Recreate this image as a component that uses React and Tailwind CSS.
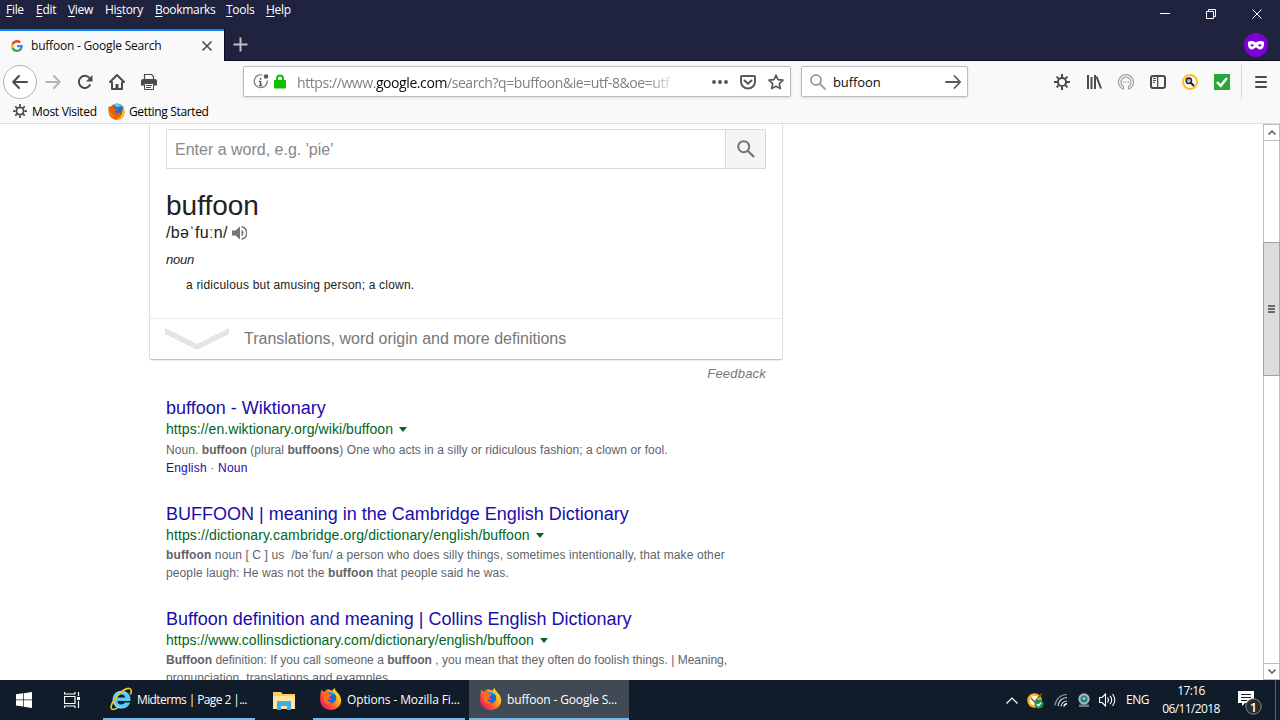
import React from 'react';

const menus = [
  { key: 'F', before: '', after: 'ile', width: 'w-[30px]' },
  { key: 'E', before: '', after: 'dit', width: 'w-[32px]' },
  { key: 'V', before: '', after: 'iew', width: 'w-[37px]' },
  { key: 's', before: 'Hi', after: 'tory', width: 'w-[50px]' },
  { key: 'B', before: '', after: 'ookmarks', width: 'w-[71px]' },
  { key: 'T', before: '', after: 'ools', width: 'w-[40px]' },
  { key: 'H', before: '', after: 'elp', width: 'w-[40px]' },
];

const GoogleIcon = () => (
  <svg width="12" height="12" viewBox="0 0 48 48">
    <path fill="#4285F4" d="M47 24.5c0-1.600-.2-3.200-.4-4.500H24v9h13c-.6 3-2.300 5.500-4.900 7.200v6h7.900C44.500 38 47 31.800 47 24.500z" />
    <path fill="#34A853" d="M24 48c6.500 0 12-2.100 16-5.800l-7.900-6c-2.200 1.400-4.900 2.300-8.100 2.300-6.300 0-11.600-4.200-13.500-9.900H2.400v6.200C6.400 42.600 14.500 48 24 48z" />
    <path fill="#FBBC05" d="M10.500 28.600c-1-3-1-6.200 0-9.200v-6.200H2.400c-3.300 6.800-3.300 14.800 0 21.600z" />
    <path fill="#EA4335" d="M24 9.500c3.500 0 6.700 1.200 9.200 3.600l6.900-6.900C35.900 2.400 30.500 0 24 0 14.500 0 6.400 5.400 2.400 13.200l8.100 6.200C12.400 13.700 17.700 9.500 24 9.500z" />
  </svg>
);

const GearIcon = ({ size = 16, color = '#4a4a4c' }) => (
  <svg width={size} height={size} viewBox="0 0 16 16" fill="none" stroke={color}>
    <circle cx="8" cy="8" r="4.100" strokeWidth="2" />
    <path d="M8 0v3M8 13v3M0 8h3M13 8h3M2.600 2.600l2 2M11.400 11.400l2 2M13.400 2.600l-2 2M4.600 11.400l-2 2" strokeWidth="2" />
  </svg>
);

const FirefoxOld = () => (
  <svg width="17" height="17" viewBox="0 0 32 32">
    <circle cx="17" cy="15" r="14" fill="#2a6fb5" />
    <path d="M10 3c5-3 14-2 17 4-3-2-6-1-8 1-3 0-6-2-9-5z" fill="#6fc4ea" />
    <path d="M2 5c1 2 2 2 4 2 1-2 3-3 5-3-1 2-1 4 1 6 2 0 4 0 5 2-1 2-4 2-4 4 1 4 7 4 10 1 2 1 1 3-1 5 4-1 7-5 7-11 3 4 3 10 0 14-4 7-13 8-19 5C1 26-1 15 2 5z" fill="#e66000" />
    <path d="M28 8c4 6 4 13 0 17-3 4-8 6-13 5 8-1 12-7 12-14z" fill="#ffcb2d" />
    <path d="M3 10c0 8 3 13 10 16-7 0-11-5-11-11z" fill="#ff9500" />
  </svg>
);

const FirefoxIcon = ({ id }) => (
  <svg width="24" height="24" viewBox="0 0 24 24">
    <defs>
      <linearGradient id={id} x1="1" y1="0.100" x2="0.100" y2="0.900">
        <stop offset="0" stopColor="#fff44f" />
        <stop offset="0.350" stopColor="#ffb31c" />
        <stop offset="0.650" stopColor="#ff5a2a" />
        <stop offset="1" stopColor="#f0106c" />
      </linearGradient>
    </defs>
    <path d="M2.600 2.500c.8 1.200 1.500 2 2.500 2.500C6.300 3.500 7.700 2.600 9 2.300l4.500 1.500c.3-1 1-2 2.300-2.800 0 2 1.200 2.900 2.600 4.400 2.200 2.300 3.900 5 3.800 8.200C22.100 19 17.800 23 12 23S1.200 19 1.200 12.800c0-4.300.2-7.500 1.400-10.300z" fill={`url(#${id})`} />
    <circle cx="11.500" cy="11" r="5.800" fill="#1667d8" />
    <path d="M8 5.500C9.500 4 12 4 13.500 5c1 .8 1.500 2 1.500 3-1.500-1.300-4-2-7-2.500z" fill="#35a8f0" />
    <path d="M5 5.500C6.300 4 7.700 3 9 2.700c-.5 1.300-.4 2.700.6 3.900 1.200.2 2.600.5 3.200 1.300-.4 1.200-2.500 1.300-2.500 2.500 1.200.6 2 .9 1.400 1.800-1.200.5-2.400 0-3.400.6.5 2 2.600 2.800 4.900 2.200-1 2.500-6 2.800-7.700-.5C4 12 4 8 5 5.500z" fill="#ff6a22" />
  </svg>
);

const IEIcon = () => (
  <svg width="24" height="24" viewBox="0 0 24 24" fill="none">
    <path d="M21 15.500h-5.200c-.7 1.300-1.900 2-3.500 2-2.200 0-3.700-1.400-3.900-3.600h13c.8-6-3-10.200-8.800-10.200-5.200 0-9 3.800-9 9s3.600 8.900 9 8.900c4.200 0 7.300-2.200 8.400-6.100zM8.500 10.500c.4-1.900 1.800-3 3.900-3s3.500 1.100 3.800 3z" fill="#5cc9f5" />
    <path d="M6 7.500c3-3.400 8-4 11.500-1M5 15c1 3.500 4 5.500 7.500 5.400" stroke="#a9e8ff" strokeWidth="1" />
    <path d="M21.500 7.500c1.300-3.400.8-5.800-1.200-6-2.400-.3-7.300 2.300-11.600 6.800C3.600 13.700 1 19.700 2.600 21.800c1 1.300 3.400.6 6.200-1.200" stroke="#f5c518" strokeWidth="1.700" />
  </svg>
);

const TitleBar = () => (
  <div className="h-[29px] bg-[#20233f] flex justify-between text-white">
    <div className="flex pl-[6px] pt-[2px] text-[12px] leading-4 tracking-[-0.3px]">
      {menus.map((m) => (
        <span key={m.key} className={m.width}>
          {m.before}
          <span className="underline underline-offset-2">{m.key}</span>
          {m.after}
        </span>
      ))}
    </div>
    <div className="flex">
      <svg width="128" height="29" viewBox="0 0 128 29" fill="none" stroke="#fff" strokeWidth="1">
        <path d="M8 13.500h10" />
        <path d="M54.500 11.500h7v7h-7zM56.500 11v-1.500h7v7H62" />
        <path d="M100.500 9.500l9 9M109.500 9.500l-9 9" />
      </svg>
    </div>
  </div>
);

const TabBar = () => (
  <div className="h-[32px] bg-[#20233f] flex">
    <div className="w-[224px] bg-[#f9f9fa] border-t-2 border-[#0a84ff] flex items-center pl-[11px] pr-[11px]">
      <GoogleIcon />
      <span className="ml-[8px] flex-1 text-[12px] tracking-[-0.21px] whitespace-nowrap text-[#0c0c0d]">buffoon - Google Search</span>
      <svg width="12" height="12" viewBox="0 0 12 12" stroke="#4a4a4c" strokeWidth="1.600">
        <path d="M1.500 1.500l9 9M10.500 1.500l-9 9" />
      </svg>
    </div>
    <div className="flex-1 flex items-center justify-between pl-[8px] pr-[12px] border-b border-l border-[#0c0c1f]">
      <svg width="15" height="15" viewBox="0 0 15 15" stroke="#c0c0c9" strokeWidth="2">
        <path d="M7.500 .5v14M.5 7.500h14" />
      </svg>
      <svg width="24" height="24" viewBox="0 0 24 24">
        <circle cx="12" cy="12" r="12" fill="#8000d7" />
        <path fillRule="evenodd" fill="#fff" d="M4 9c2-1.500 5.500-1.200 8 .5 2.500-1.700 6-2 8-.5.5 5-1.500 7.500-4 7.500-2 0-2.700-2-4-2s-2 2-4 2C5.500 16.500 3.500 14 4 9zM6.300 12.300c1 1.600 2.700 1.600 3.700 0-1-1.500-2.700-1.500-3.700 0zM14 12.300c1 1.600 2.700 1.600 3.700 0-1-1.500-2.700-1.500-3.700 0z" />
      </svg>
    </div>
  </div>
);

const NavBar = () => (
  <div className="h-[41px] flex items-center pl-[3px]">
    <div className="w-[34px] h-[34px] rounded-full border border-[#b1b1b3] bg-white flex items-center justify-center">
      <svg width="16" height="16" viewBox="0 0 16 16" fill="none" stroke="#4a4a4c" strokeWidth="2" strokeLinecap="round" strokeLinejoin="round">
        <path d="M15 8H1.500M7 2L1.200 8 7 14" />
      </svg>
    </div>
    <div className="flex items-center gap-4 ml-[8px] w-[198px]">
      <svg width="16" height="16" viewBox="0 0 16 16" fill="none" stroke="#b5b5b7" strokeWidth="2" strokeLinecap="round" strokeLinejoin="round">
        <path d="M1 8h13.500M9 2l5.800 6L9 14" />
      </svg>
      <svg width="16" height="16" viewBox="0 0 16 16" fill="none" stroke="#4a4a4c" strokeWidth="2">
        <path d="M13.300 10.500a6 6 0 1 1-.8-6.500" />
        <path d="M15.500 1v6.500H9z" fill="#4a4a4c" stroke="none" />
      </svg>
      <svg width="16" height="16" viewBox="0 0 16 16" fill="none" stroke="#4a4a4c" strokeWidth="2" strokeLinejoin="round">
        <path d="M1 8l7-7 7 7" strokeLinecap="round" />
        <path d="M3 7.500V15h10V7.500" />
        <path d="M8 15v-5" strokeWidth="3" />
      </svg>
      <svg width="16" height="16" viewBox="0 0 16 16">
        <path d="M3.500 5.500v-5h7l2 2v3" fill="none" stroke="#4a4a4c" strokeWidth="1.200" />
        <path d="M0 7a2 2 0 0 1 2-2h12a2 2 0 0 1 2 2v4.500h-3V9H3v2.500H0z" fill="#4a4a4c" />
        <path d="M3.500 9.500h9v6h-9zM5 11.500h6M5 13.500h5" fill="#fff" stroke="#4a4a4c" />
      </svg>
    </div>
    <div className="w-[548px] h-[31px] bg-white border border-[#bdbdbf] rounded-[2px] shadow-sm flex items-center pl-[8px] pr-[6px]">
      <svg width="18" height="18" viewBox="0 0 18 18">
        <path d="M10.500 2A6.500 6.500 0 1 0 15.200 7.500" fill="none" stroke="#737373" strokeWidth="1.200" />
        <path d="M8.600 5v1.800M8.600 8v5M7 8.500h1.600M7 12.500h3.200" stroke="#5a5a5c" strokeWidth="1.500" />
        <circle cx="14" cy="3.500" r="2.300" fill="#5a5a5c" />
      </svg>
      <svg width="12" height="15" viewBox="0 0 12 15" className="ml-[4px]">
        <path d="M3 7V4.500a3 3 0 0 1 6 0V7" fill="none" stroke="#12bc00" strokeWidth="2" />
        <rect y="6" width="12" height="8.500" rx="1" fill="#12bc00" />
      </svg>
      <span className="ml-[11px] pt-[2px] w-[380px] whitespace-nowrap text-[14px] tracking-[-0.42px] text-[#808080] [mask-image:linear-gradient(to_right,black_92%,transparent)]">
        https://www.<span className="text-[#0c0c0d]">google.com</span>/search?q=buffoon&amp;ie=utf-8&amp;oe=utf
      </span>
      <svg width="16" height="16" viewBox="0 0 16 16" className="ml-auto" fill="#5a5a5c">
        <circle cx="2" cy="8" r="2" />
        <circle cx="8" cy="8" r="2" />
        <circle cx="14" cy="8" r="2" />
      </svg>
      <svg width="16" height="16" viewBox="0 0 16 16" className="ml-3" fill="none" stroke="#5a5a5c" strokeWidth="2" strokeLinecap="round" strokeLinejoin="round">
        <path d="M2 2h12a1 1 0 0 1 1 1v4.500a7 7 0 0 1-14 0V3a1 1 0 0 1 1-1z" />
        <path d="M4.500 6.500L8 9.800l3.500-3.300" />
      </svg>
      <svg width="16" height="16" viewBox="0 0 16 16" className="ml-3" fill="none" stroke="#5a5a5c" strokeWidth="1.700" strokeLinejoin="round">
        <path d="M8 1.200l2 4.500 5 .5-3.700 3.400 1 5L8 12.200l-4.300 2.400 1-5L1 6.200l5-.5z" />
      </svg>
    </div>
    <div className="ml-[10px] w-[167px] h-[31px] bg-white border border-[#bdbdbf] rounded-[2px] shadow-sm flex items-center pl-[8px] pr-[6px]">
      <svg width="16" height="16" viewBox="0 0 16 16" fill="none" stroke="#a0a0a2" strokeWidth="2">
        <circle cx="6" cy="6" r="5" />
        <path d="M9.800 9.800l5.700 5.700" />
      </svg>
      <span className="ml-[7px] pt-[2px] flex-1 text-[13px] tracking-[-0.1px] text-[#0c0c0d]">buffoon</span>
      <svg width="16" height="16" viewBox="0 0 16 16" fill="none" stroke="#5a5a5c" strokeWidth="1.800" strokeLinecap="round" strokeLinejoin="round">
        <path d="M.8 8H15M9.500 2l5.700 6-5.700 6" />
      </svg>
    </div>
    <div className="ml-auto flex items-center gap-4 pr-[11px]">
      <GearIcon />
      <svg width="16" height="16" viewBox="0 0 16 16" stroke="#4a4a4c" strokeWidth="2">
        <path d="M2 1v14M5.500 3v12M9 1v14M10.500 2.500l4.500 12" />
      </svg>
      <svg width="16" height="16" viewBox="0 0 16 16" fill="none" stroke="#a3a3a5">
        <path d="M5 15a7.500 7.500 0 1 1 6 0" strokeWidth="1.200" />
        <path d="M5.500 12.500a5 5 0 1 1 5 0" strokeWidth="1.200" />
        <path d="M5 8h1.200M7.400 8h1.200M9.800 8H11" strokeWidth="1.300" />
        <path d="M5.500 12v3.500M10.500 12v3.500" />
      </svg>
      <svg width="16" height="16" viewBox="0 0 16 16" fill="none" stroke="#4a4a4c">
        <rect x="1" y="2" width="14" height="12" rx="2" strokeWidth="2" />
        <path d="M7.700 2v12" strokeWidth="1.300" />
        <path d="M3 4.500h3M3 6.500h3M3 8.500h2" />
      </svg>
      <svg width="16" height="16" viewBox="0 0 16 16" fill="none">
        <circle cx="8" cy="8" r="7" fill="#fff" stroke="#ffbf1f" strokeWidth="2" />
        <circle cx="6.800" cy="6.800" r="2.800" fill="#999" stroke="#222" strokeWidth="1.300" />
        <path d="M8.800 8.800l3.200 3.200" stroke="#222" strokeWidth="2" />
        <path d="M5.500 7l1 1 1.700-2.200" stroke="#fff" strokeWidth=".8" />
      </svg>
      <svg width="16" height="16" viewBox="0 0 16 16" fill="none">
        <path fill="#27a737" d="M0 0h16v16H0z" />
        <path d="M3 8l3.700 3.800L13 4" stroke="#fff" strokeWidth="2.500" />
      </svg>
      <div className="ml-[-5px] w-px h-[34px] bg-[#d7d7db]" />
      <svg width="16" height="16" viewBox="0 0 16 16" className="ml-[-5px]" stroke="#4a4a4c" strokeWidth="2" strokeLinecap="round">
        <path d="M3 3h10M3 8h10M3 13h10" />
      </svg>
    </div>
  </div>
);

const BookmarksBar = () => (
  <div className="h-[22px] border-b border-[#dcdcdf] flex items-center pl-[13px] pb-[3px] text-[12px] tracking-[-0.35px] text-black">
    <GearIcon size={14} />
    <span className="ml-[5px] w-[76px] pt-[2px] tracking-[-0.3px]">Most Visited</span>
    <FirefoxOld />
    <span className="ml-[4px] pt-[2px]">Getting Started</span>
  </div>
);

const Definition = () => (
  <div className="w-[634px] h-[236px] shrink-0 border border-t-0 border-[#dedede] border-b-[#c4c4c4] rounded-b-[3px] shadow-[0_1px_1px_rgba(0,0,0,0.08)] flex flex-col">
    <div className="mx-4 mt-[5px] h-10 shrink-0 border border-[#d9d9d9] rounded-[1px] flex">
      <div className="flex-1 pl-2 text-[16px] leading-[39px] text-[#878787]">Enter a word, e.g. 'pie'</div>
      <div className="w-10 bg-[#f5f5f5] border-l border-[#d9d9d9] flex items-center justify-center">
        <svg width="18" height="18" viewBox="0 0 18 18" fill="none" stroke="#757575" strokeWidth="2">
          <circle cx="6.700" cy="6.700" r="5.500" />
          <path d="M10.700 10.700l6.300 6.300" strokeWidth="2.300" />
        </svg>
      </div>
    </div>
    <div className="px-4 pt-[20px] text-[#222]">
      <div className="text-[28px] leading-[34px]">buffoon</div>
      <div className="flex items-center h-[19px] text-[16px]">
        <span className="tracking-[0.35px]">/bəˈfuːn/</span>
        <svg width="15" height="14" viewBox="0 0 15 14" className="ml-[4px]" fill="#757575">
          <path d="M0 4.500h3.500L8 .5v13L3.500 9.500H0zM9.500 3.500a4 4 0 0 1 0 7z" />
          <path d="M9.500 .8a6.300 6.300 0 0 1 0 12.400" fill="none" stroke="#757575" strokeWidth="1.500" />
        </svg>
      </div>
      <div className="mt-[9px] text-[13px] leading-[18px] italic tracking-[-0.2px]">noun</div>
      <div className="mt-[8px] pl-5 text-[12px] leading-[17px] tracking-[0.2px]">a ridiculous but amusing person; a clown.</div>
    </div>
    <div className="mt-auto h-[41px] shrink-0 border-t border-[#ebebeb] flex items-center pl-[15px]">
      <svg width="64" height="22" viewBox="0 0 64 22" fill="#e5e5e5">
        <path d="M0 0l32 16L64 0v6L32 22 0 6z" />
      </svg>
      <span className="ml-[15px] text-[16px] text-[#777]">Translations, word origin and more definitions</span>
    </div>
  </div>
);

const Result = ({ title, url, urlClass, textClass, children }) => (
  <div className="h-[105.5px] shrink-0">
    <h3 className="text-[18px] leading-[22px] text-[#1a0dab]">{title}</h3>
    <div className={`flex items-center h-[21px] text-[14px] text-[#006621] ${urlClass}`}>
      {url}
      <svg width="8" height="5" viewBox="0 0 8 5" className="ml-[6px]" fill="#006621">
        <path d="M0 0h8L4 5z" />
      </svg>
    </div>
    <div className={`text-[12px] leading-[18px] text-[#5f6368] whitespace-nowrap ${textClass}`}>{children}</div>
  </div>
);

const Scrollbar = () => (
  <div className="w-[17px] border-x border-[#bdbdbd] bg-white flex flex-col">
    <div className="h-[17px] border-y border-[#bdbdbd] flex items-center justify-center">
      <svg width="8" height="5" viewBox="0 0 8 5" fill="none" stroke="#555" strokeWidth="1.500">
        <path d="M.5 4.500L4 1l3.500 3.500" />
      </svg>
    </div>
    <div className="mt-[101px] -mx-px h-[134px] bg-[#dcdcdc] border border-[#a3a3a3] flex flex-col items-center justify-center gap-px">
      <div className="w-[7px] h-[2px] bg-[#6a6a6a]" />
      <div className="w-[7px] h-[2px] bg-[#6a6a6a]" />
      <div className="w-[7px] h-[2px] bg-[#6a6a6a]" />
    </div>
    <div className="mt-auto h-[17px] border-y border-[#bdbdbd] flex items-center justify-center">
      <svg width="8" height="5" viewBox="0 0 8 5" fill="none" stroke="#555" strokeWidth="1.500">
        <path d="M.5 .5L4 4 7.500 .5" />
      </svg>
    </div>
  </div>
);

const Page = () => (
  <div className="h-[556px] bg-white flex overflow-hidden font-['Liberation_Sans',Arial,sans-serif]">
    <div className="flex-1 pl-[149px] flex flex-col overflow-hidden">
      <Definition />
      <div className="w-[617px] mt-[5px] text-right text-[13px] leading-[18px] italic text-[#777] tracking-[0.2px]">Feedback</div>
      <div className="pl-[17px] mt-[14px]">
        <Result
          title="buffoon - Wiktionary"
          url="https://en.wiktionary.org/wiki/buffoon"
          urlClass="tracking-[0.07px]"
          textClass="tracking-[0.065px] pt-px"
        >
          Noun. <b>buffoon</b> (plural <b>buffoons</b>) One who acts in a silly or ridiculous fashion; a clown or fool.
          <br />
          <span className="tracking-[0.2px]">
            <span className="text-[#1a0dab]">English</span> · <span className="text-[#1a0dab]">Noun</span>
          </span>
        </Result>
        <Result
          title="BUFFOON | meaning in the Cambridge English Dictionary"
          url="https://dictionary.cambridge.org/dictionary/english/buffoon"
          urlClass="tracking-[0.12px]"
          textClass="tracking-[0.11px]"
        >
          <b>buffoon</b> noun [ C ] us &nbsp;/bəˈfun/ a person who does silly things, sometimes intentionally, that make other
          <br />
          people laugh: He was not the <b>buffoon</b> that people said he was.
        </Result>
        <Result
          title="Buffoon definition and meaning | Collins English Dictionary"
          url="https://www.collinsdictionary.com/dictionary/english/buffoon"
          urlClass="tracking-[0.03px]"
          textClass="tracking-[0.01px]"
        >
          <b>Buffoon</b> definition: If you call someone a <b>buffoon</b> , you mean that they often do foolish things. | Meaning,
          <br />
          <span className="tracking-[0.1px]">pronunciation, translations and examples.</span>
        </Result>
      </div>
    </div>
    <Scrollbar />
  </div>
);

const Tray = () => (
  <div className="ml-auto flex items-center">
    <svg width="12" height="7" viewBox="0 0 12 7" fill="none" stroke="#fff" strokeWidth="1.200">
      <path d="M.5 6.500L6 1l5.500 5.500" />
    </svg>
    <svg width="17" height="17" viewBox="0 0 17 17" className="ml-[9px]" fill="none">
      <circle cx="7.500" cy="8.500" r="6" fill="#fff" stroke="#fdb913" strokeWidth="2.500" />
      <path d="M4 6l3.500 4L15 1.500" stroke="#8a5a10" strokeWidth="1.300" />
      <circle cx="12" cy="12" r="4.500" fill="#159447" />
      <path d="M9.800 12l1.700 1.700 2.700-3.200" stroke="#fff" strokeWidth="1.400" />
    </svg>
    <svg width="14" height="14" viewBox="0 0 14 14" className="ml-[10px]" fill="none" stroke="#8c939b" strokeWidth="1.200">
      <path d="M1 12.500A12 12 0 0 1 13 1.500" />
      <path d="M4 13A9 9 0 0 1 13 4.500M7 13.500A6 6 0 0 1 13 8" stroke="#d5d9dd" />
      <path d="M10 13.500a3 3 0 0 1 3-2.800" stroke="#fff" strokeWidth="1.500" />
    </svg>
    <svg width="12" height="14" viewBox="0 0 12 14" className="ml-[10px]">
      <path d="M1 11.500h10V14H1z" fill="#777" />
      <circle cx="6" cy="6" r="5.700" fill="#aeb4b6" />
      <circle cx="6" cy="6" r="3.500" fill="#287e80" />
      <circle cx="6" cy="5.500" r="1.500" fill="#7bd1cf" />
    </svg>
    <svg width="17" height="14" viewBox="0 0 17 14" className="ml-[9px]" fill="none" stroke="#fff" strokeWidth="1.100">
      <path d="M.6 4.500h2.500L6.500 1v12L3.100 9.500H.6z" />
      <path d="M8.500 4.500c1.200 1.500 1.200 3.500 0 5M11 2.800c2 2.500 2 6 0 8.400M13.500 1c3 3.500 3 8.500 0 12" />
    </svg>
    <span className="ml-[10px] w-[34px] text-[12px] tracking-[-0.5px]">ENG</span>
    <div className="w-[62px] text-center text-[12px] leading-[18px] tracking-[-0.6px] whitespace-nowrap">
      <div>17:16</div>
      <div>06/11/2018</div>
    </div>
    <svg width="25" height="26" viewBox="0 0 25 26" className="ml-[16px] mt-[6px]">
      <path d="M0 1h16v12H7l-3 3v-3H0z" fill="#fff" />
      <path d="M3 4.500h10M3 7.500h10M3 10.500h6" stroke="#101c29" />
      <circle cx="15.500" cy="16.500" r="7.700" fill="#2b2b2b" stroke="#8a8a8a" />
      <text x="15.500" y="21.500" fontSize="13" fontWeight="600" textAnchor="middle" fill="#fff">1</text>
    </svg>
    <div className="ml-[12px] mr-[4px] w-px h-10 bg-[#59626c]" />
  </div>
);

const Taskbar = () => (
  <div className="h-10 bg-[#101c29] flex text-white text-[12px]">
    <div className="w-12 flex items-center justify-center">
      <svg width="16" height="16" viewBox="0 0 16 16" fill="#fff">
        <path d="M0 2.300L7 1.300V7.600H0zM7.700 1.200L16 0V7.600H7.700zM0 8.300h7v6.300l-7-1zM7.700 8.300H16V16l-8.300-1.200z" />
      </svg>
    </div>
    <div className="w-12 flex items-center justify-center">
      <svg width="16" height="16" viewBox="0 0 16 16" fill="none" stroke="#fff" strokeWidth="1.200">
        <path d="M.5 4.500h10.500v7H.5zM.5 0v2h10.500V0M.5 16v-2h10.500v2M14.500 0v4M14.500 9v7" />
        <path d="M13 5h3v3h-3z" fill="#fff" stroke="none" />
      </svg>
    </div>
    <div className="ml-[7px] w-[152px] border-b-2 border-[#76b9ed] flex items-center pl-[6px] whitespace-nowrap">
      <IEIcon />
      <span className="ml-[4px] pt-[2px] tracking-[-0.6px]">Midterms | Page 2 |...</span>
    </div>
    <div className="w-[58px] flex items-center justify-center">
      <svg width="22" height="19" viewBox="0 0 22 19">
        <path d="M0 1h8l1.500 2H22v15H0z" fill="#f5cf62" />
        <path d="M0 5h22v13H0z" fill="#ffe69b" />
        <path d="M4 19v-8a1 1 0 0 1 1-1h12a1 1 0 0 1 1 1v8h-4v-4H8v4z" fill="#38b0e8" />
      </svg>
    </div>
    <div className="w-[152px] border-b-2 border-[#76b9ed] flex items-center pl-[6px] whitespace-nowrap">
      <FirefoxIcon id="fx-options" />
      <span className="ml-[4px] pt-[2px] tracking-[-0.12px]">Options - Mozilla Fi...</span>
    </div>
    <div className="ml-[4px] w-[160px] bg-[#414a54] border-b-2 border-[#76b9ed] flex items-center pl-[10px] whitespace-nowrap">
      <FirefoxIcon id="fx-search" />
      <span className="ml-[4px] pt-[2px] tracking-[-0.15px]">buffoon - Google S...</span>
    </div>
    <Tray />
  </div>
);

export default function App() {
  return (
    <div className="w-[1280px] h-[720px] overflow-hidden bg-[#f9f9fa] font-['Open_Sans','Noto_Sans',sans-serif]">
      <TitleBar />
      <TabBar />
      <NavBar />
      <BookmarksBar />
      <Page />
      <Taskbar />
    </div>
  );
}
